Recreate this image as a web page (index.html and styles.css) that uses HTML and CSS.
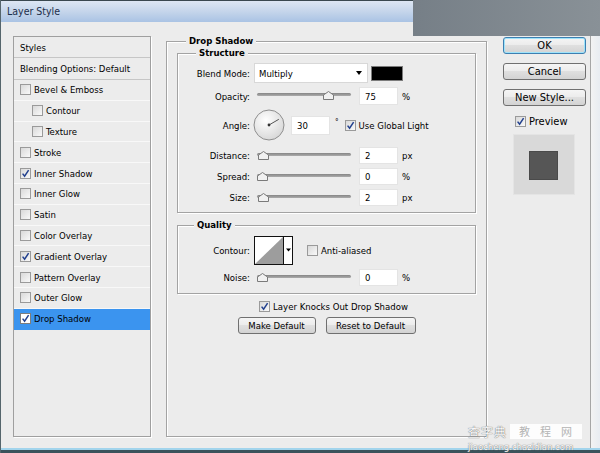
FILE: index.html
```html
<!DOCTYPE html>
<html>
<head>
<meta charset="utf-8">
<title>Layer Style</title>
<link rel="stylesheet" href="styles.css">
</head>
<body>
<div class="win">
  <div class="titlebar"><span class="title">Layer Style</span></div>
  <div class="desk"></div>
  <div class="main">
    <div class="styles">
      <div class="row head">Styles</div>
      <div class="row head">Blending Options: Default</div>
      <div class="row"><span class="cb"></span>Bevel &amp; Emboss</div>
      <div class="row sub"><span class="cb"></span>Contour</div>
      <div class="row sub"><span class="cb"></span>Texture</div>
      <div class="row"><span class="cb"></span>Stroke</div>
      <div class="row"><span class="cb"><svg class="ck" viewBox="0 0 9 9"><path d="M1.6 4.6 L3.6 7.2 L7.6 1.2"/></svg></span>Inner Shadow</div>
      <div class="row"><span class="cb"></span>Inner Glow</div>
      <div class="row"><span class="cb"></span>Satin</div>
      <div class="row"><span class="cb"></span>Color Overlay</div>
      <div class="row"><span class="cb"><svg class="ck" viewBox="0 0 9 9"><path d="M1.6 4.6 L3.6 7.2 L7.6 1.2"/></svg></span>Gradient Overlay</div>
      <div class="row"><span class="cb"></span>Pattern Overlay</div>
      <div class="row"><span class="cb"></span>Outer Glow</div>
      <div class="row sel"><span class="cb white"><svg class="ck" viewBox="0 0 9 9"><path d="M1.6 4.6 L3.6 7.2 L7.6 1.2"/></svg></span>Drop Shadow</div>
    </div>

    <fieldset class="grp outer">
      <legend>Drop Shadow</legend>
      <fieldset class="grp inner structure">
        <legend>Structure</legend>
        <div class="frow r-blend">
          <span class="lbl">Blend Mode:</span>
          <div class="select"><span>Multiply</span><span class="arrow"></span></div>
          <span class="swatch"></span>
        </div>
        <div class="frow r-op">
          <span class="lbl">Opacity:</span>
          <div class="slider"><span class="thumb" style="left:66px"><svg width="11" height="9" viewBox="0 0 11 9"><path d="M0.5 8.5 V4 L5.5 0.5 L10.5 4 V8.5 Z"/></svg></span></div>
          <span class="num">75</span><span class="unit">%</span>
        </div>
        <div class="frow r-angle">
          <span class="lbl">Angle:</span>
          <svg class="dial" width="32" height="32" viewBox="0 0 32 32">
            <defs><radialGradient id="dg" cx="0.4" cy="0.35" r="0.7"><stop offset="0" stop-color="#ffffff"/><stop offset="1" stop-color="#d6d6d6"/></radialGradient></defs>
            <circle cx="16" cy="16" r="15" fill="url(#dg)" stroke="#8e8e8e"/>
            <line x1="16" y1="16" x2="25.8" y2="10.3" stroke="#555" stroke-width="1"/>
            <circle cx="16" cy="16" r="1.4" fill="#333"/>
          </svg>
          <span class="num">30</span><span class="deg">°</span>
          <span class="cb gl"><svg class="ck" viewBox="0 0 9 9"><path d="M1.6 4.6 L3.6 7.2 L7.6 1.2"/></svg></span><span>Use Global Light</span>
        </div>
        <div class="frow r-dist">
          <span class="lbl">Distance:</span>
          <div class="slider"><span class="thumb" style="left:1px"><svg width="11" height="9" viewBox="0 0 11 9"><path d="M0.5 8.5 V4 L5.5 0.5 L10.5 4 V8.5 Z"/></svg></span></div>
          <span class="num">2</span><span class="unit">px</span>
        </div>
        <div class="frow r-sm">
          <span class="lbl">Spread:</span>
          <div class="slider"><span class="thumb" style="left:0px"><svg width="11" height="9" viewBox="0 0 11 9"><path d="M0.5 8.5 V4 L5.5 0.5 L10.5 4 V8.5 Z"/></svg></span></div>
          <span class="num">0</span><span class="unit">%</span>
        </div>
        <div class="frow r-sm">
          <span class="lbl">Size:</span>
          <div class="slider"><span class="thumb" style="left:1px"><svg width="11" height="9" viewBox="0 0 11 9"><path d="M0.5 8.5 V4 L5.5 0.5 L10.5 4 V8.5 Z"/></svg></span></div>
          <span class="num">2</span><span class="unit">px</span>
        </div>
      </fieldset>

      <fieldset class="grp inner quality">
        <legend>Quality</legend>
        <div class="frow r-contour">
          <span class="lbl">Contour:</span>
          <svg class="contour" width="39" height="29" viewBox="0 0 39 29">
            <rect x="0.5" y="0.5" width="38" height="28" fill="#fff" stroke="#111"/>
            <path d="M1 28 L29 1 L29 28 Z" fill="#9d9d9d"/>
            <line x1="29.5" y1="0.5" x2="29.5" y2="28.5" stroke="#111"/>
            <path d="M32 12.5 H37 L34.5 15.5 Z" fill="#000"/>
          </svg>
          <span class="cb aa"></span><span>Anti-aliased</span>
        </div>
        <div class="frow r-noise">
          <span class="lbl">Noise:</span>
          <div class="slider"><span class="thumb" style="left:0px"><svg width="11" height="9" viewBox="0 0 11 9"><path d="M0.5 8.5 V4 L5.5 0.5 L10.5 4 V8.5 Z"/></svg></span></div>
          <span class="num">0</span><span class="unit">%</span>
        </div>
      </fieldset>

      <div class="knock"><span class="cb"><svg class="ck" viewBox="0 0 9 9"><path d="M1.6 4.6 L3.6 7.2 L7.6 1.2"/></svg></span><span>Layer Knocks Out Drop Shadow</span></div>
      <div class="btns">
        <span class="btn b-make">Make Default</span>
        <span class="btn b-reset">Reset to Default</span>
      </div>
    </fieldset>

    <div class="side">
      <span class="btn big ok">OK</span>
      <span class="btn big">Cancel</span>
      <span class="btn big">New Style...</span>
      <div class="pv"><span class="cb"><svg class="ck" viewBox="0 0 9 9"><path d="M1.6 4.6 L3.6 7.2 L7.6 1.2"/></svg></span><span>Preview</span></div>
      <div class="pbox"><span class="sq"></span></div>
    </div>

    <div class="edge"></div>
  </div>
  <div class="bottom"></div>

  <div class="wm">
    <div class="wm-top"><span class="wm-cn">查字典</span><span class="wm-box">教程网</span></div>
    <div class="wm-url">jiaocheng.chazidian.com</div>
  </div>
</div>
</body>
</html>
```

FILE: styles.css
```css
* { box-sizing: border-box; }
html, body { margin: 0; padding: 0; }
body {
  width: 600px;
  height: 453px;
  overflow: hidden;
  background: #ececec;
  font-family: "DejaVu Sans Condensed", "DejaVu Sans", sans-serif;
  font-size: 9.5px;
  color: #000;
}
.win {
  position: relative;
  width: 600px;
  height: 453px;
  background: #ececec;
  border-left: 1px solid #55656c;
  display: flex;
  flex-direction: column;
}
.titlebar {
  flex: none;
  height: 22px;
  width: 412px;
  padding-left: 6px;
  display: flex;
  align-items: center;
  background: linear-gradient(#3a484f 0, #3a484f 1px, #dde6f3 1px, #c6d6eb 50%, #aac3e4 100%);
}
.title { font-size: 10.5px; color: #1c2e4a; }
.desk {
  position: absolute;
  top: 0;
  left: 412px;
  width: 188px;
  height: 36px;
  background: linear-gradient(to right, #767f87, #899197);
}
.main {
  flex: 1;
  display: flex;
  align-items: flex-start;
  padding: 14px 0 0 12px;
}

/* styles list */
.styles {
  flex: none;
  width: 138px;
  height: 401px;
  border: 1px solid #9f9f9f;
  box-shadow: 1px 1px 0 #fff;
  background: #ececec;
}
.row {
  height: 20.8px;
  display: flex;
  align-items: center;
  padding-left: 6px;
  border-bottom: 1px solid #f8f8f8;
  white-space: nowrap;
}
.row.head { border-bottom: 1px solid #c6c6c6; }
.row.head:first-child { height: 21px; }
.row.head:nth-child(2) { height: 22px; }
.row.sub { padding-left: 18px; }
.row.sel { background: #3b94ef; border-bottom-color: #3b94ef; }

.cb {
  flex: none;
  width: 11px;
  height: 11px;
  margin-right: 3px;
  border: 1px solid #9a9a9a;
  background: linear-gradient(135deg, #d9d9d9, #f9f9f9);
  display: flex;
  align-items: center;
  justify-content: center;
}
.cb.white { background: #fff; border-color: #7d7d7d; }
.ck { width: 9px; height: 9px; }
.ck path { fill: none; stroke: #22408e; stroke-width: 1.5; }

/* group boxes */
.grp {
  margin: 0;
  min-width: 0;
  border: 1px solid #a3a3a3;
  box-shadow: inset 1px 1px 0 #fff, 1px 1px 0 #fff;
}
.grp > legend {
  font-weight: bold;
  line-height: 12px;
  padding: 0 3px;
  background: #ececec;
}
.outer {
  flex: none;
  width: 321px;
  height: 402px;
  margin: -1px 0 0 15px;
  padding: 0 10px;
}
.outer > legend { margin-left: 9px; }
.inner { padding: 0 0 6px 0; }
.structure > legend { margin-left: 18px; }
.quality { margin-top: 6px; padding-bottom: 7px; }
.quality > legend { margin-left: 16px; }

.frow {
  display: flex;
  align-items: center;
  margin-top: 4px;
  height: 18px;
  white-space: nowrap;
}
.lbl {
  flex: none;
  width: 72px;
  margin-right: 4px;
  text-align: right;
}
.r-blend { height: 20px; }
.r-angle { height: 32px; }
.r-dist { margin-top: 6px; height: 17px; }
.r-sm { height: 17px; }
.r-contour { margin-top: 5px; height: 29px; }
.r-noise { height: 17px; }

.select {
  flex: none;
  width: 114px;
  height: 20px;
  background: #fff;
  border: 1px solid #d8d8d8;
  padding: 0 5px 0 4px;
  display: flex;
  align-items: center;
  justify-content: space-between;
}
.arrow {
  width: 0;
  height: 0;
  border-left: 3.5px solid transparent;
  border-right: 3.5px solid transparent;
  border-top: 4px solid #000;
}
.swatch {
  flex: none;
  width: 32px;
  height: 15px;
  margin-left: 3px;
  background: #000;
  border: 1px solid #7c7c7c;
}
.slider {
  flex: none;
  position: relative;
  width: 94px;
  height: 10px;
  margin: 0 8px 0 3px;
}
.slider::before {
  content: "";
  position: absolute;
  left: 0;
  right: 0;
  top: 2px;
  height: 3px;
  border-radius: 2px;
  background: linear-gradient(#858585, #acacac);
}
.thumb { position: absolute; top: 0; width: 11px; height: 9px; }
.thumb svg { display: block; }
.thumb path { fill: #f1f1f1; stroke: #7a7a7a; stroke-width: 1; }
.num {
  flex: none;
  width: 39px;
  height: 100%;
  padding-left: 5px;
  display: flex;
  align-items: center;
  background: #fff;
  border: 1px solid #e4e4e4;
}
.unit { margin-left: 4px; }
.dial { flex: none; margin: 0 6px 0 -1px; }
.r-angle .num { height: 19px; }
.deg { margin-left: 5px; font-size: 8px; margin-top: -5px; }
.cb.gl { margin-left: 6px; }
.contour { flex: none; display: block; }
.cb.aa { margin-left: 14px; }

.knock {
  margin-top: 6px;
  height: 12px;
  display: flex;
  align-items: center;
  justify-content: center;
  padding-left: 14px;
  white-space: nowrap;
}
.btns {
  margin-top: 5px;
  display: flex;
  justify-content: center;
  gap: 10px;
}
.btn {
  flex: none;
  height: 17px;
  border: 1px solid #707070;
  border-radius: 3px;
  background: linear-gradient(#f5f5f5, #ececec 45%, #dfdfdf 50%, #d3d3d3);
  display: flex;
  align-items: center;
  justify-content: center;
  white-space: nowrap;
}
.b-make { width: 78px; }
.b-reset { width: 90px; }

/* right column */
.side {
  flex: none;
  width: 83px;
  margin: 1px 0 0 16px;
  display: flex;
  flex-direction: column;
  font-size: 11px;
}
.btn.big + .btn.big { margin-top: 9px; }
.ok {
  border-color: #3c7fb1;
  box-shadow: inset 0 0 0 1px #9fe3fa;
}
.pv {
  margin-top: 9px;
  height: 12px;
  padding-left: 12px;
  display: flex;
  align-items: center;
}
.pbox {
  margin: 7px 0 0 10px;
  width: 62px;
  height: 61px;
  padding: 16px 0 0 15px;
  background: #d9d9d9;
  border: 1px solid #e4e4e4;
}
.sq {
  display: block;
  width: 29px;
  height: 29px;
  background: #565656;
  border: 1px solid #4a4a4a;
}
.edge {
  margin-left: auto;
  align-self: stretch;
  width: 10px;
  border-left: 1px solid #a6a6a6;
  background: linear-gradient(to right, #f3f3f3, #e8ecf1);
}
.bottom {
  flex: none;
  height: 5px;
  border-top: 2px solid #a2d4ec;
  background: #3b525b;
}

/* watermark */
.wm {
  position: absolute;
  left: 467px;
  top: 424px;
  display: flex;
  flex-direction: column;
  font-family: "Noto Sans CJK SC", sans-serif;
}
.wm-top { display: flex; align-items: center; gap: 3px; height: 15px; }
.wm-cn {
  font-size: 12px;
  line-height: 15px;
  letter-spacing: 1px;
  color: #f8f8f8;
  text-shadow: 0 0 1px #7a7a7a, 0 0 1px #7a7a7a;
}
.wm-box {
  background: rgba(255, 255, 255, 0.9);
  color: #b4b4b4;
  font-size: 11px;
  line-height: 15px;
  letter-spacing: 10px;
  padding: 0 0 0 9px;
}
.wm-url {
  margin-top: 4px;
  font-family: "DejaVu Sans", sans-serif;
  font-size: 8.5px;
  line-height: 8px;
  color: #fff;
  text-shadow: 0 0 1px #7a7a7a, 0 0 1px #7a7a7a;
}
```
